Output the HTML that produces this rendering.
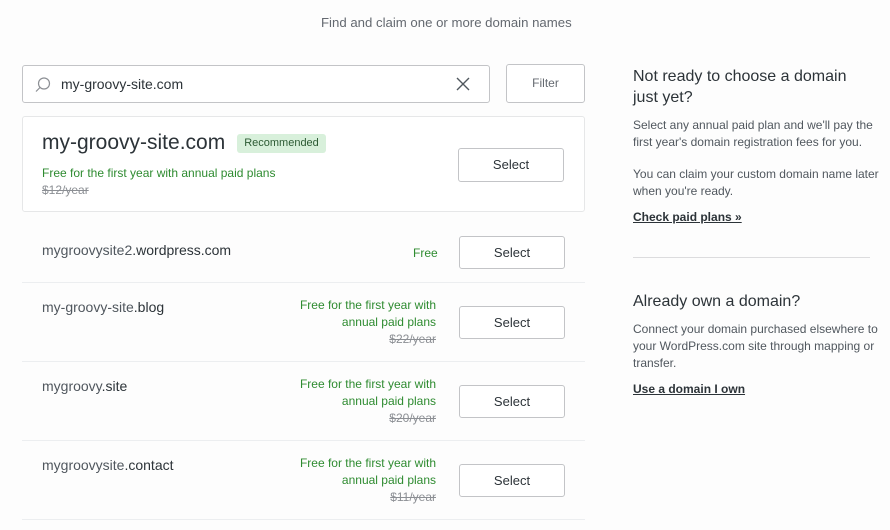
<!DOCTYPE html>
<html><head><meta charset="utf-8"><style>
*{box-sizing:border-box;margin:0;padding:0}
body{width:890px;height:530px;overflow:hidden;background:#fdfdfd;font-family:"Liberation Sans",sans-serif;color:#2c3338;position:relative}
.a{position:absolute}
.btn{position:absolute;border:1px solid #c3c4c7;border-radius:3px;background:#fff;font-size:13px;color:#2c3338;text-align:center}
.g{color:#2e8b30;font-size:12px}
.s{color:#8c8f94;font-size:12px;text-decoration:line-through}
.sep{position:absolute;left:22px;width:563px;height:1px;background:#eceef0}
.dn{position:absolute;left:42px;font-size:14px;color:#50575e}
.dn b{font-weight:normal;color:#2c3338}
.pr{position:absolute;right:454px;text-align:right;line-height:17px}
</style></head><body>
<div class="a" style="left:321px;top:15px;font-size:13.2px;color:#646970">Find and claim one or more domain names</div>
<div class="a" style="left:22px;top:65px;width:468px;height:38px;border:1px solid #c3c4c7;border-radius:3px;background:#fff"></div>
<svg class="a" style="left:34px;top:76px" width="18" height="18" viewBox="0 0 18 18"><circle cx="10" cy="7.5" r="5.5" fill="none" stroke="#8c8f94" stroke-width="1.2"/><path d="M6 11.5L2 15.5" stroke="#8c8f94" stroke-width="1.2"/></svg>
<div class="a" style="left:61px;top:76px;font-size:14px">my-groovy-site.com</div>
<svg class="a" style="left:455px;top:76px" width="16" height="16" viewBox="0 0 16 16"><path d="M2 2L14 14M14 2L2 14" stroke="#50575e" stroke-width="1.4"/></svg>
<div class="btn" style="left:506px;top:64px;width:79px;height:39px;line-height:37px;color:#646970;font-size:12px">Filter</div>
<div class="a" style="left:22px;top:116px;width:563px;height:96px;border:1px solid #e6e7e8;border-radius:3px;background:#fff"></div>
<div class="a" style="left:42px;top:131px;font-size:21px">my-groovy-site.com</div>
<div class="a" style="left:237px;top:134px;width:89px;height:19px;background:#d8f0db;border-radius:3px;font-size:11px;color:#2c5a33;text-align:center;line-height:19px">Recommended</div>
<div class="a g" style="left:42px;top:166px">Free for the first year with annual paid plans</div>
<div class="a s" style="left:42px;top:183px">$12/year</div>
<div class="btn" style="left:458px;top:148px;width:106px;height:34px;line-height:32px">Select</div>

<div class="dn" style="top:242px">mygroovysite2<b>.wordpress.com</b></div>
<div class="a g" style="left:413px;top:246px">Free</div>
<div class="btn" style="left:459px;top:236px;width:106px;height:33px;line-height:31px">Select</div>
<div class="sep" style="top:282px"></div>

<div class="dn" style="top:299px">my-groovy-site<b>.blog</b></div>
<div class="pr" style="top:297px"><div class="g">Free for the first year with</div><div class="g">annual paid plans</div><div class="s">$22/year</div></div>
<div class="btn" style="left:459px;top:306px;width:106px;height:33px;line-height:31px">Select</div>
<div class="sep" style="top:361px"></div>

<div class="dn" style="top:378px">mygroovy<b>.site</b></div>
<div class="pr" style="top:376px"><div class="g">Free for the first year with</div><div class="g">annual paid plans</div><div class="s">$20/year</div></div>
<div class="btn" style="left:459px;top:385px;width:106px;height:33px;line-height:31px">Select</div>
<div class="sep" style="top:440px"></div>

<div class="dn" style="top:457px">mygroovysite<b>.contact</b></div>
<div class="pr" style="top:455px"><div class="g">Free for the first year with</div><div class="g">annual paid plans</div><div class="s">$11/year</div></div>
<div class="btn" style="left:459px;top:464px;width:106px;height:33px;line-height:31px">Select</div>
<div class="sep" style="top:519px"></div>

<div class="a" style="left:633px;top:66px;width:240px;font-size:16px;line-height:21px">Not ready to choose a domain just yet?</div>
<div class="a" style="left:633px;top:117px;width:245px;font-size:12px;line-height:17px;color:#50575e">Select any annual paid plan and we'll pay the first year's domain registration fees for you.</div>
<div class="a" style="left:633px;top:166px;width:256px;font-size:12px;line-height:17px;color:#50575e">You can claim your custom domain name later<br>when you're ready.</div>
<div class="a" style="left:633px;top:210px;font-size:12px;text-decoration:underline;font-weight:bold;color:#2c3338">Check paid plans »</div>
<div class="a" style="left:633px;top:257px;width:237px;height:1px;background:#dcdcde"></div>
<div class="a" style="left:633px;top:293px;font-size:16px">Already own a domain?</div>
<div class="a" style="left:633px;top:321px;width:250px;font-size:12px;line-height:17px;color:#50575e">Connect your domain purchased elsewhere to your WordPress.com site through mapping or transfer.</div>
<div class="a" style="left:633px;top:382px;font-size:12px;text-decoration:underline;font-weight:bold;color:#2c3338">Use a domain I own</div>
</body></html>
